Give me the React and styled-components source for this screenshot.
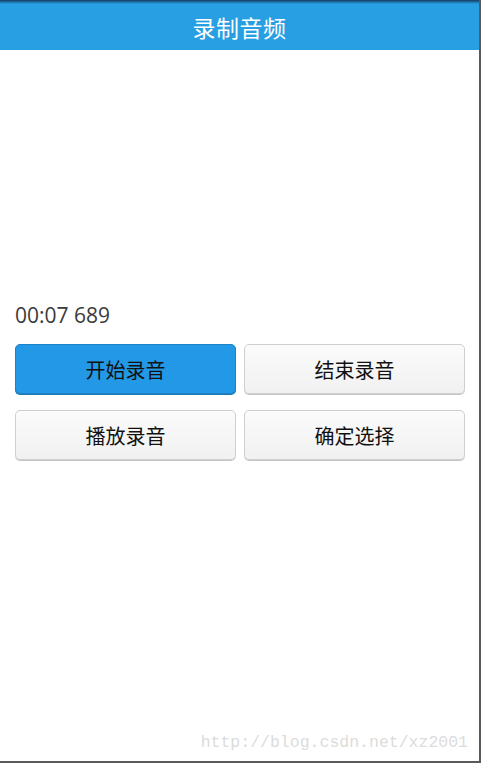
import React from "react";
import styled, { createGlobalStyle } from "styled-components";

const Global = createGlobalStyle`
  html, body { margin: 0; padding: 0; background: #ffffff; }
  * { box-sizing: border-box; }
`;

const Screen = styled.div`
  position: relative;
  width: 481px;
  height: 763px;
  background: #ffffff;
  border-right: 2px solid #5a5a5a;
  border-bottom: 2px solid #5a5a5a;
  display: flex;
  flex-direction: column;
  overflow: hidden;
  font-family: "Noto Sans CJK SC", "Open Sans", sans-serif;
`;

const Header = styled.header`
  height: 50px;
  flex: none;
  background: linear-gradient(to bottom, #143a5c 0px, #1f6fa8 2px, #289fe3 4px, #289fe3 100%);
  display: flex;
  align-items: center;
  justify-content: center;
  padding-top: 3px;
`;

const Title = styled.h1`
  margin: 0;
  color: #ffffff;
  font-size: 23px;
  font-weight: 400;
  letter-spacing: 0.5px;
  font-family: "Noto Sans CJK SC", sans-serif;
`;

const Body = styled.main`
  flex: 1;
  padding: 252px 14px 0 15px;
  display: flex;
  flex-direction: column;
`;

const Timer = styled.div`
  font-family: "Open Sans", "Noto Sans CJK SC", sans-serif;
  font-size: 21px;
  line-height: 26px;
  color: #3a3a3a;
  height: 26px;
  margin-bottom: 16px;
`;

const Grid = styled.div`
  display: grid;
  grid-template-columns: 221px 221px;
  column-gap: 8px;
  row-gap: 16px;
`;

const Button = styled.button`
  height: 50px;
  border-radius: 5px;
  font-family: "Noto Sans CJK SC", sans-serif;
  font-size: 20px;
  color: #111111;
  padding: 0;
  cursor: pointer;
  border: 1px solid ${(p) => (p.$primary ? "#1c82c4" : "#cfcfcf")};
  background: ${(p) =>
    p.$primary
      ? "#2398e6"
      : "linear-gradient(to bottom, #fbfbfb 0%, #f1f1f1 100%)"};
  box-shadow: ${(p) => (p.$primary ? "0 1px 0 #1a78b5" : "0 1px 0 #c4c4c4")};
`;

const Watermark = styled.div`
  position: absolute;
  right: 11px;
  bottom: 9px;
  font-family: "Liberation Mono", "DejaVu Sans Mono", monospace;
  font-size: 16.5px;
  color: #dcdcdc;
`;

export default function App() {
  return (
    <>
      <Global />
      <Screen>
        <Header>
          <Title>录制音频</Title>
        </Header>
        <Body>
          <Timer>00:07 689</Timer>
          <Grid>
            <Button $primary>开始录音</Button>
            <Button>结束录音</Button>
            <Button>播放录音</Button>
            <Button>确定选择</Button>
          </Grid>
        </Body>
        <Watermark>http://blog.csdn.net/xz2001</Watermark>
      </Screen>
    </>
  );
}
